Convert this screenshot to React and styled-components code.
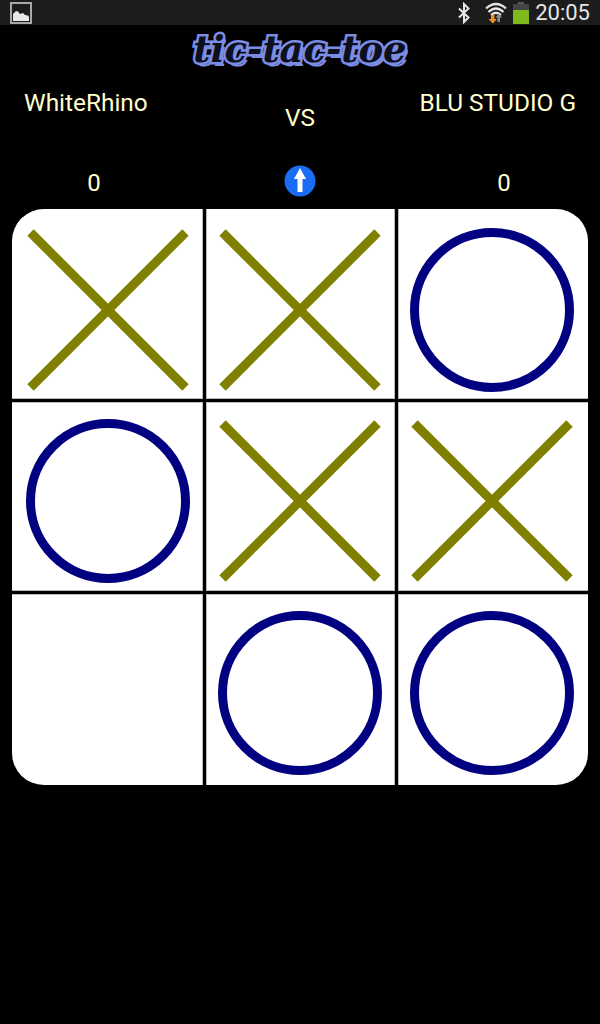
import React from "react";
import styled, { createGlobalStyle } from "styled-components";

const GlobalStyle = createGlobalStyle`
  html, body {
    margin: 0;
    padding: 0;
    background-color: #000;
    font-family: Roboto, "Liberation Sans", sans-serif;
  }
`;

const Screen = styled.div`
  width: 600px;
  height: 1024px;
  overflow: hidden;
  background-color: #000;
`;

const StatusBar = styled.div`
  height: 25px;
  display: flex;
  align-items: center;
  justify-content: space-between;
  padding: 0 10px;
  background-color: #1c1c1c;
`;

const StatusRight = styled.div`
  display: flex;
  align-items: center;
  gap: 6px;
`;

const Bluetooth = styled.svg`
  margin-right: 8px;
`;

const Clock = styled.span`
  font-size: 22px;
  line-height: 25px;
  color: #e6e6e6;
`;

const Title = styled.h1`
  height: 47px;
  margin: 0;
  display: flex;
  align-items: center;
  justify-content: center;
  font-family: "DejaVu Serif", serif;
  font-size: 37px;
  font-style: italic;
  font-weight: bold;
  letter-spacing: 0;
  color: #0d0f1c;
  -webkit-text-stroke: 5px #7b8ce4;
  paint-order: stroke fill;
  text-shadow: 3px 4px 0 #7b8ce4, -1px 1px 0 #7b8ce4;
`;

const Players = styled.div`
  height: 59px;
  padding: 17px 24px 0;
  box-sizing: border-box;
  display: grid;
  grid-template-columns: 1fr auto 1fr;
  font-size: 24.4px;
  line-height: 27px;
  color: #ffffcc;
`;

const RightName = styled.span`
  justify-self: end;
`;

const Versus = styled.span`
  margin-top: 15px;
`;

const Scores = styled.div`
  height: 78px;
  display: grid;
  grid-template-columns: 188px 224px 184px;
  align-items: center;
  justify-items: center;
  padding-top: 22px;
  box-sizing: border-box;
`;

const Score = styled.span`
  font-size: 24px;
  color: #ffffcc;
  padding-top: 4px;
`;

const Board = styled.div`
  width: 576px;
  margin-left: 12px;
  display: grid;
  grid-template-columns: 191px 189px 190px;
  grid-template-rows: 190px 189px 191px;
  gap: 3px;
  border-radius: 32px;
  overflow: hidden;
  background-color: #000;
`;

const edge = "#bbb";

const Cell = styled.div`
  background-color: #fff;
  display: flex;
  align-items: center;
  justify-content: center;
  padding-top: ${(p) => p.$pad}px;
  padding-right: ${(p) => p.$col}px;
  box-sizing: border-box;
  box-shadow:
    inset ${(p) => (p.$col > 0 ? 1 : 0)}px 0 0 ${edge},
    inset ${(p) => (p.$col < 2 ? -1 : 0)}px 0 0 ${edge},
    inset 0 ${(p) => (p.$row > 0 ? 1 : 0)}px 0 ${edge},
    inset 0 ${(p) => (p.$row < 2 ? -1 : 0)}px 0 ${edge};
`;

const Cross = () => (
  <svg width="162" height="162" viewBox="0 0 162 162">
    <path d="M3.500 3.500L158.500 158.500M158.500 3.500L3.500 158.500" stroke="#808000" strokeWidth="9" fill="none" />
  </svg>
);

const Nought = () => (
  <svg width="164" height="164" viewBox="0 0 164 164">
    <circle cx="82" cy="82" r="77.500" stroke="#000080" strokeWidth="9" fill="none" />
  </svg>
);

const rows = [
  { pad: 12, marks: ["x", "x", "o"] },
  { pad: 8, marks: ["o", "x", "x"] },
  { pad: 6, marks: ["", "o", "o"] },
];

const App = () => (
  <Screen>
    <GlobalStyle />
    <StatusBar>
      <svg width="22" height="22" viewBox="0 0 22 22">
        <rect x="1" y="1" width="20" height="20" fill="none" stroke="#a8a8a8" strokeWidth="2" />
        <path d="M3 19V12L6 9L8 9.5L10 12L13 11L15 13L18 13.5L19 15V19Z" fill="#e8e8e8" />
      </svg>
      <StatusRight>
        <Bluetooth width="14" height="22" viewBox="0 0 14 22">
          <path d="M2 6.5L11.5 15.5L7 20V2L11.5 6.5L2 15.5" fill="none" stroke="#e8e8e8" strokeWidth="2" />
        </Bluetooth>
        <svg width="22" height="22" viewBox="0 0 22 22">
          <path d="M1 6.500Q11 -2.500 21 6.500M3.500 10Q11 3 18.500 10M6 13Q11 8.500 16 13" fill="none" stroke="#e8e8e8" strokeWidth="2.200" />
          <path d="M6 13H9.500V17H12L7.750 21.500L3.500 17H6Z" fill="#e8942a" />
          <path d="M12.500 20V15.500H10.500L13.750 11.500L17 15.500H15V20Z" fill="#8c8c8c" />
        </svg>
        <svg width="16" height="22" viewBox="0 0 16 22">
          <rect x="5" y="0" width="6" height="2" fill="#555" />
          <rect x="0" y="2" width="16" height="7" fill="#444" />
          <rect x="0" y="8" width="16" height="14" fill="#7fba1c" />
        </svg>
        <Clock>20:05</Clock>
      </StatusRight>
    </StatusBar>

    <Title>tic-tac-toe</Title>

    <Players>
      <span>WhiteRhino</span>
      <Versus>VS</Versus>
      <RightName>BLU STUDIO G</RightName>
    </Players>

    <Scores>
      <Score>0</Score>
      <svg width="32" height="32" viewBox="0 0 32 32">
        <circle cx="16" cy="16" r="15.500" fill="#1a6cf5" />
        <path d="M13.500 27V14H10L16 3L22 14H18.500V27Z" fill="#fff" />
      </svg>
      <Score>0</Score>
    </Scores>

    <Board>
      {rows.map((row, r) =>
        row.marks.map((mark, c) => (
          <Cell key={`${r}-${c}`} $pad={row.pad} $col={c} $row={r}>
            {mark === "x" && <Cross />}
            {mark === "o" && <Nought />}
          </Cell>
        ))
      )}
    </Board>
  </Screen>
);

export default App;
